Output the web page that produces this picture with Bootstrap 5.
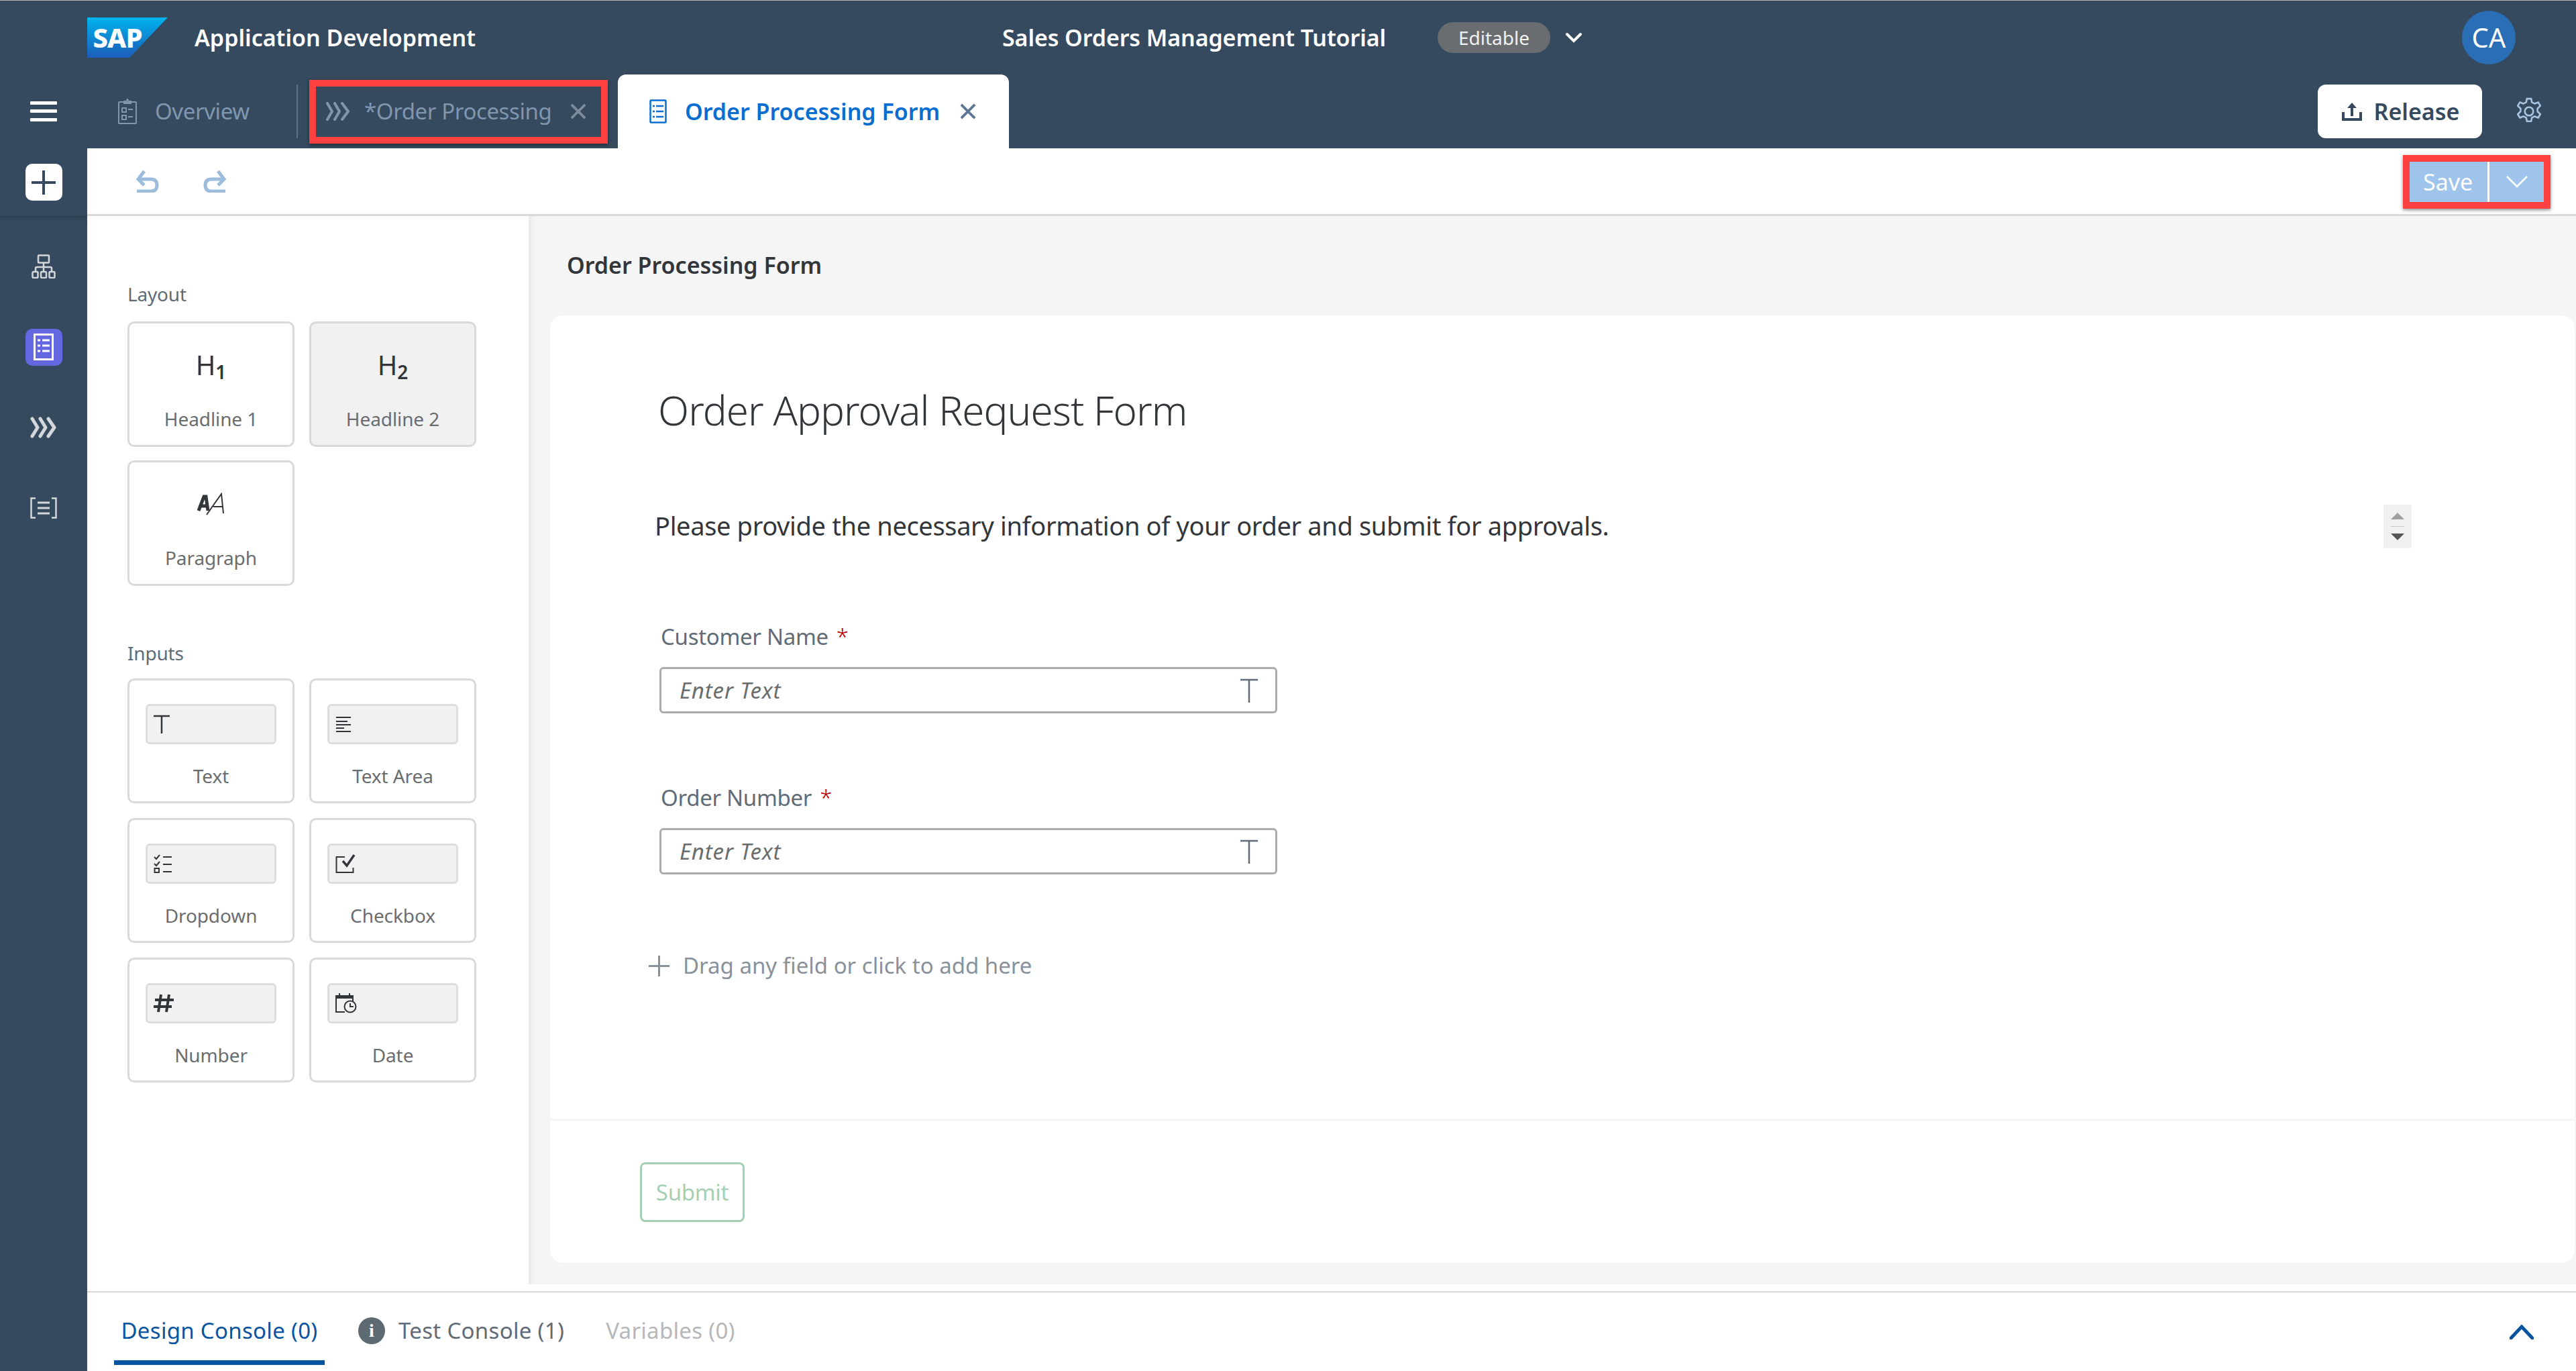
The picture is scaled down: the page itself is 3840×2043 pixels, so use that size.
<!DOCTYPE html>
<html lang="en"><head><meta charset="utf-8"><title>Application Development</title>
<link href="https://cdn.jsdelivr.net/npm/bootstrap@5.3.0/dist/css/bootstrap.min.css" rel="stylesheet">
<style>
html,body{height:100%}
body{font-family:"Noto Sans","Open Sans",sans-serif;background:#fff;border-top:1px solid #b5b5b5;color:#32363a;overflow:hidden}
.app-shell{height:100%}
.rail{width:130px;background:#354a5f;flex:none}
.rail-top{height:320px;padding-top:150px;box-shadow:0 5px 8px rgba(0,0,0,.13)}
.rail-burger{width:40px;height:30px;margin-bottom:63px}
.rail-plus{width:55px;height:55px;background:#fff;border-radius:10px}
.rail-list{padding-top:16px}
.rail-item{height:120px}
.rail-form{width:55px;height:55px;background:#6567e0;border-radius:10px}
.shell-head{height:110px;background:#354a5f;color:#fff}
.sap-logo{width:120px;height:60px;flex:none;position:relative;display:block}
.sap-logo svg{display:block}
.sap-word{position:absolute;left:2px;top:0;width:86px;height:60px;line-height:60px;font-size:40px;font-weight:800;color:#fff;letter-spacing:-1px;text-align:center}
.app-title{font-size:34px;font-weight:600;margin-left:40px;width:1204px;white-space:nowrap}
.proj-title{font-size:34px;font-weight:600;width:649px;white-space:nowrap;letter-spacing:-.1px}
.pill-edit{width:168px;height:46px;background:#6a6d70;color:#f0f0f0;border-radius:23px;font-size:28px}
.head-chev{margin-left:23px}
.user-dot{width:80px;height:80px;border-radius:50%;background:#2a6fb5;font-size:40px;margin-right:90px;margin-left:auto;color:#fff}
.tab-row{height:110px;background:#354a5f;align-items:stretch}
.tab-ov{width:314px;height:80px;align-self:center;padding-left:46px;border-right:2px solid #5d7186;color:#7f96ae;font-size:33px;letter-spacing:-.4px;gap:27px}
.tab-red{width:445px;height:95px;align-self:center;margin-left:17px;border:10px solid #ff4040;box-shadow:0 2px 5px rgba(0,0,0,.45);color:#7f96ae;font-size:33px;letter-spacing:-.4px;padding-left:14px}
.tab-red-ico{margin-right:20px}
.tab-red-x{margin-right:22px}
.tab-cur{width:583px;margin-left:15px;background:#fff;border-radius:12px 12px 0 0;padding-left:47px;color:#0a6ed1;font-size:34px;font-weight:600}
.tab-cur-ico{margin-right:27px}
.tab-cur-txt{width:410px;white-space:nowrap}
.btn-release{width:245px;height:80px;background:#fff;border:0;border-radius:12px;color:#354a5f;font-size:34px;font-weight:600;gap:18px;padding:0 0 0 2px}
.btn-release:hover{background:#fff;color:#354a5f}
.gear-wrap{margin:0 49px}
.tool-row{height:101px;border-bottom:3px solid #d9d9d9;padding-left:72px;background:#fff}
.undo-ico{margin-right:66px}
.save-box{width:220px;height:80px;border:10px solid #ff4040;box-shadow:0 2px 5px rgba(0,0,0,.45);margin-left:auto;margin-right:38px;margin-top:2px;background:#9fc4ec;color:#fff;font-size:34px}
.save-main{width:119px;border-right:3px solid #fff;height:100%;padding-left:20px}
.work{min-height:0}
.palette{width:658px;padding:98px 0 0 60px;flex:none;background:#fff}
.pal-head{font-size:28px;line-height:36px;color:#5f6b76;margin-bottom:23px;letter-spacing:-.2px}
.pal-head-2{margin-top:82px;margin-bottom:20px}
.pal-grid{display:grid;grid-template-columns:249px 249px;gap:20px 22px;grid-auto-rows:187px}
.pal-grid-2{gap:22px;grid-auto-rows:186px}
.pal-cell{border:3px solid #d9d9d9;border-radius:10px;background:#fff;color:#6a6d70;font-size:28px;line-height:36px;letter-spacing:-.1px}
.pal-cell-on{background:#f1f1f1}
.pal-ico{height:60px;margin:32px 0 32px;font-size:40px;line-height:1;color:#32363a;letter-spacing:0}
.pal-ico sub{font-size:28px;font-weight:600;bottom:-.22em;line-height:0}
.pal-mini{width:195px;height:60px;margin:35px 0 29px;background:#f1f1f1;border:3px solid #ddd;border-radius:6px;padding-left:9px}
.canvas{background:#f5f5f5;box-shadow:inset 12px 0 10px -8px rgba(0,0,0,.06);min-width:0}
.canvas-title{padding:53px 0 0 57px;line-height:40px;font-size:34px;font-weight:600;color:#32363a;margin-bottom:55px}
.form-card{margin:0 2px 32px 32px;background:#fff;border-radius:20px;min-height:0}
.form-body{padding:101px 0 0 162px;border-bottom:3px solid #f5f5f5}
.form-h{font-size:60px;line-height:80px;font-weight:300;margin:0 0 0 -1px;color:#32363a;letter-spacing:-.9px}
.desc-row{margin:101px 0 0 -6px;width:2619px;height:65px}
.desc-txt{font-size:38px;line-height:50px;color:#32363a;letter-spacing:-.35px;margin-top:-3px}
.spin{width:42px;height:65px;background:#f0f0f0;border-radius:0 2px 2px 0}
.fld-lab{margin:112px 0 25px 3px;font-size:33px;line-height:40px;color:#5f6b76;letter-spacing:-.3px}
.fld-lab-2{margin-top:106px}
.req{color:#bb0000;margin-left:12px;font-weight:300}
.fld-box{width:921px;height:69px;margin-left:1px;border:3px solid #ababab;border-radius:6px;padding:0 26px 0 27px;background:#fff}
.fld-input{border:0;outline:0;flex:1;font-size:33px;font-style:italic;padding:0;min-width:0;letter-spacing:.85px;color:#32363a;background:transparent}
.fld-input::placeholder{color:#6a6d70;opacity:1}
.drag-row{margin:116px 0 0 -15px;height:40px;font-size:33px;color:#89919a;gap:20px;letter-spacing:0}
.form-foot{height:212px;padding:62px 0 0 134px}
.btn-submit{width:156px;height:89px;border:3px solid #a5cfb5;color:#a5cfb5;background:#fff;border-radius:8px;font-size:33px;padding:0;letter-spacing:-.3px}
.btn-submit:hover{background:#fff;color:#a5cfb5;border-color:#a5cfb5}
.work-gap{height:10px;background:#fff;flex:none}
.dock{height:119px;border-top:2px solid #d9d9d9;padding-left:40px;background:#fff;flex:none;font-size:33px;letter-spacing:.3px}
.dock-tab{height:108px;padding-top:13px;border-bottom:7px solid transparent;align-self:flex-start;white-space:nowrap}
.dock-on{width:314px;color:#0854a0;border-bottom-color:#0854a0;justify-content:center}
.dock-test{margin-left:50px;color:#5f6b76;gap:20px}
.dock-var{margin-left:62px;color:#b5b8bb}
.info-dot{width:40px;height:40px;border-radius:50%;background:#5d6a72;color:#fff;font-size:28px;font-weight:700;font-family:"Liberation Serif",serif;line-height:40px;letter-spacing:0}
.dock-up{margin-left:auto;margin-right:63px}
</style></head>
<body>
<div class="app-shell d-flex">
  <aside class="rail d-flex flex-column">
    <div class="rail-top d-flex flex-column align-items-center">
      <svg class="rail-burger" viewBox="0 0 40 30"><g fill="#fff"><rect y="0" width="40" height="5" rx="1"/><rect y="12" width="40" height="5" rx="1"/><rect y="25" width="40" height="5" rx="1"/></g></svg>
      <div class="rail-plus d-flex align-items-center justify-content-center"><svg width="36" height="36" viewBox="0 0 36 36"><path d="M18 0v36M0 18h36" stroke="#354a5f" stroke-width="4"/></svg></div>
    </div>
    <div class="rail-list d-flex flex-column align-items-center">
      <div class="rail-item d-flex align-items-center"><svg width="36" height="36" viewBox="0 0 36 36" fill="none" stroke="#d4d7da" stroke-width="2.5"><rect x="10" y="1.5" width="16" height="11" rx="1"/><path d="M18 13v6M6 26v-5q0-2 2-2h20q2 0 2 2v5M18 19v7"/><rect x="1.5" y="26" width="8" height="9" rx="1.5"/><rect x="14" y="26" width="8" height="9" rx="1.5"/><rect x="26.5" y="26" width="8" height="9" rx="1.5"/></svg></div>
      <div class="rail-item d-flex align-items-center"><div class="rail-form d-flex align-items-center justify-content-center"><svg width="30" height="40" viewBox="0 0 30 40" fill="none"><rect x="1.5" y="1.5" width="27" height="37" stroke="#fff" stroke-width="3"/><g stroke="#fff" stroke-width="3"><path d="M6 10h4M13 10h11M6 18h4M13 18h11M6 26h4M13 26h11"/></g></svg></div></div>
      <div class="rail-item d-flex align-items-center"><svg width="40" height="32" viewBox="0 0 40 32" fill="none" stroke="#d4d7da" stroke-width="5" stroke-linecap="round" stroke-linejoin="round"><path d="M3 3l8 13-8 13M15 3l8 13-8 13M27 3l9 13-9 13"/></svg></div>
      <div class="rail-item d-flex align-items-center"><svg width="40" height="32" viewBox="0 0 40 32" fill="none" stroke="#d4d7da" stroke-width="2.5"><path d="M8 1.5H1.5v29H8M32 1.5h6.500v29H32"/><path d="M11 8h18M11 16h18M11 24h18" stroke-width="3"/></svg></div>
    </div>
  </aside>
  <div class="flex-grow-1 d-flex flex-column" style="min-width:0">
    <header class="shell-head d-flex align-items-center">
      <div class="sap-logo"><svg width="120" height="60" viewBox="0 0 120 60"><defs><linearGradient id="sapg" x1="0" y1="0" x2="0" y2="1"><stop offset="0" stop-color="#00b4ee"/><stop offset="1" stop-color="#1c5cb8"/></linearGradient></defs><polygon points="0,0 120,0 63,60 0,60" fill="url(#sapg)"/></svg><span class="sap-word">SAP</span></div>
      <div class="app-title">Application Development</div>
      <div class="proj-title">Sales Orders Management Tutorial</div>
      <div class="pill-edit d-flex align-items-center justify-content-center">Editable</div>
      <svg width="24" height="16" viewBox="0 0 24 16" fill="none" stroke="#fff" stroke-width="4" stroke-linecap="round" class="head-chev"><path d="M2 3l10 10L22 3"/></svg>
      <div class="user-dot d-flex align-items-center justify-content-center">CA</div>
    </header>
    <div class="tab-row d-flex">
      <div class="tab-ov d-flex align-items-center">
        <svg width="28" height="38" viewBox="0 0 28 38" fill="none" stroke="#7f96ae" stroke-width="2"><rect x="1" y="5" width="26" height="32" rx="1"/><path d="M9 7V4h3l2-3 2 3h3v3zM6 14h6v6H6zM6 25h6v6H6zM15 16h7M15 27h7"/></svg>
        <span>Overview</span>
      </div>
      <div class="tab-red d-flex align-items-center">
        <svg width="38" height="28" viewBox="0 0 38 28" fill="none" stroke="#7f96ae" stroke-width="4" stroke-linecap="round" stroke-linejoin="round" class="tab-red-ico"><path d="M3 2l7 12-7 12M14 2l7 12-7 12M25 2l9 12-9 12"/></svg>
        <span class="flex-grow-1">*Order Processing</span>
        <svg width="24" height="24" viewBox="0 0 26 26" stroke="#7b8c9c" stroke-width="4" class="tab-red-x"><path d="M2 2l22 22M24 2L2 24"/></svg>
      </div>
      <div class="tab-cur d-flex align-items-center">
        <svg width="26" height="36" viewBox="0 0 26 36" fill="none" stroke="#0a6ed1" stroke-width="2.500" class="tab-cur-ico"><rect x="1.500" y="1.500" width="23" height="33" rx="1"/><path d="M5 10h3M10 10h11M5 18h3M10 18h11M5 26h3M10 26h11"/></svg>
        <span class="tab-cur-txt">Order Processing Form</span>
        <svg width="24" height="24" viewBox="0 0 26 26" stroke="#5b7692" stroke-width="4"><path d="M2 2l22 22M24 2L2 24"/></svg>
      </div>
      <div class="d-flex align-items-center ms-auto">
        <button class="btn btn-release d-flex align-items-center justify-content-center" type="button"><svg width="30" height="30" viewBox="0 0 30 30" fill="none" stroke="#354a5f" stroke-width="4"><path d="M2 16v11h26V16M15 22V4"/><path d="M8 10l7-8 7 8z" fill="#354a5f" stroke="none"/></svg><span>Release</span></button>
        <div class="gear-wrap"><svg width="42" height="42" viewBox="0 0 40 40" fill="none" stroke="#a9c4df" stroke-width="2.500" stroke-linejoin="round"><circle cx="20" cy="20" r="6"/><path d="M17 2h6l1 5 4 2 5-2 3 5-4 4v4l4 4-3 5-5-2-4 2-1 5h-6l-1-5-4-2-5 2-3-5 4-4v-4l-4-4 3-5 5 2 4-2z"/></svg></div>
      </div>
    </div>
    <div class="tool-row d-flex align-items-center">
      <svg width="35" height="34" viewBox="0 0 35 34" fill="none" stroke="#9dbcdc" stroke-width="5" class="undo-ico"><path d="M2 32h21q9 0 9-9t-9-9H6"/><path d="M13 2L4 14l9 9"/></svg>
      <svg width="35" height="34" viewBox="0 0 35 34" fill="none" stroke="#9dbcdc" stroke-width="5"><path d="M33 32H12q-9 0-9-9t9-9h17"/><path d="M22 2l9 12-9 9"/></svg>
      <div class="save-box d-flex align-items-center">
        <div class="save-main d-flex align-items-center"><span>Save</span></div>
        <div class="flex-grow-1 d-flex align-items-center justify-content-center"><svg width="32" height="20" viewBox="0 0 32 20" fill="none" stroke="#fff" stroke-width="2.500"><path d="M1 2l15 15L31 2"/></svg></div>
      </div>
    </div>
    <div class="work flex-grow-1 d-flex">
      <section class="palette">
        <div class="pal-head">Layout</div>
        <div class="pal-grid">
          <div class="pal-cell d-flex flex-column align-items-center"><div class="pal-ico d-flex align-items-center justify-content-center"><span>H<sub>1</sub></span></div><span>Headline 1</span></div>
          <div class="pal-cell pal-cell-on d-flex flex-column align-items-center"><div class="pal-ico d-flex align-items-center justify-content-center"><span>H<sub>2</sub></span></div><span>Headline 2</span></div>
          <div class="pal-cell d-flex flex-column align-items-center"><div class="pal-ico d-flex align-items-center justify-content-center"><svg width="42" height="34" viewBox="0 0 42 34" fill="none" stroke="#32363a"><path d="M2 27L10 6h3l3 21M5 20h10" stroke-width="5"/><path d="M14 33L36 2l3 29M24 21h14" stroke-width="2"/></svg></div><span>Paragraph</span></div>
        </div>
        <div class="pal-head pal-head-2">Inputs</div>
        <div class="pal-grid pal-grid-2">
          <div class="pal-cell d-flex flex-column align-items-center"><div class="pal-mini d-flex align-items-center"><svg width="24" height="28" viewBox="0 0 24 28" stroke="#32363a" stroke-width="2.500"><path d="M0 2h24M12 2v26"/></svg></div><span>Text</span></div>
          <div class="pal-cell d-flex flex-column align-items-center"><div class="pal-mini d-flex align-items-center"><svg width="24" height="24" viewBox="0 0 24 24" stroke="#32363a" stroke-width="2"><path d="M1 2h22M1 8h17M1 13h22M1 18h12M1 23h22"/></svg></div><span>Text Area</span></div>
          <div class="pal-cell d-flex flex-column align-items-center"><div class="pal-mini d-flex align-items-center"><svg width="28" height="30" viewBox="0 0 28 30" fill="none" stroke="#32363a" stroke-width="2"><path d="M1 5l3 3 5-6M1 15l3 3 5-6"/><rect x="1.500" y="22" width="6.500" height="6"/><path d="M14 5h13M14 16h13M14 27h13"/></svg></div><span>Dropdown</span></div>
          <div class="pal-cell d-flex flex-column align-items-center"><div class="pal-mini d-flex align-items-center"><svg width="30" height="30" viewBox="0 0 30 30" fill="none" stroke="#32363a"><path d="M14 5H1.500v23h25v-7" stroke-width="2"/><path d="M11 11l6 7L28 2" stroke-width="3.500"/></svg></div><span>Checkbox</span></div>
          <div class="pal-cell d-flex flex-column align-items-center"><div class="pal-mini d-flex align-items-center"><svg width="30" height="28" viewBox="0 0 30 28" stroke="#32363a" stroke-width="4"><path d="M11 1L7 27M23 1l-4 26M2 9h28M0 19h27"/></svg></div><span>Number</span></div>
          <div class="pal-cell d-flex flex-column align-items-center"><div class="pal-mini d-flex align-items-center"><svg width="32" height="30" viewBox="0 0 32 30" fill="none" stroke="#32363a" stroke-width="2"><path d="M14 28H1V4h25v8"/><path d="M1 4h25v3H1z" fill="#32363a"/><path d="M6 0v4M21 0v4" stroke-width="2"/><circle cx="22" cy="20" r="8.500"/><path d="M22 15v5h5"/></svg></div><span>Date</span></div>
        </div>
      </section>
      <main class="canvas flex-grow-1 d-flex flex-column">
        <div class="canvas-title">Order Processing Form</div>
        <div class="form-card flex-grow-1 d-flex flex-column">
          <div class="form-body flex-grow-1">
            <h1 class="form-h">Order Approval Request Form</h1>
            <div class="desc-row d-flex align-items-center justify-content-between">
              <div class="desc-txt">Please provide the necessary information of your order and submit for approvals.</div>
              <div class="spin d-flex flex-column align-items-center justify-content-center"><svg width="20" height="42" viewBox="0 0 20 42"><polygon points="0,10 10,0 20,10" fill="#a0a0a0"/><rect x="-9" y="20" width="38" height="1" fill="#c8c8c8"/><polygon points="0,31 20,31 10,41" fill="#555"/></svg></div>
            </div>
            <div class="fld-lab">Customer Name<span class="req">*</span></div>
            <div class="fld-box d-flex align-items-center"><input class="fld-input" placeholder="Enter Text" aria-label="Customer Name"><svg width="26" height="36" viewBox="0 0 26 36" stroke="#5f6b76" stroke-width="2.500"><path d="M0 2h26M13 2v34"/></svg></div>
            <div class="fld-lab fld-lab-2">Order Number<span class="req">*</span></div>
            <div class="fld-box d-flex align-items-center"><input class="fld-input" placeholder="Enter Text" aria-label="Order Number"><svg width="26" height="36" viewBox="0 0 26 36" stroke="#5f6b76" stroke-width="2.500"><path d="M0 2h26M13 2v34"/></svg></div>
            <div class="drag-row d-flex align-items-center"><svg width="31" height="31" viewBox="0 0 31 31" stroke="#89919a" stroke-width="3"><path d="M15.500 0v31M0 15.500h31"/></svg><span>Drag any field or click to add here</span></div>
          </div>
          <div class="form-foot"><button class="btn btn-submit" type="button">Submit</button></div>
        </div>
      </main>
    </div>
    <div class="work-gap"></div>
    <footer class="dock d-flex align-items-center">
      <div class="dock-tab dock-on d-flex align-items-center">Design Console (0)</div>
      <div class="dock-tab dock-test d-flex align-items-center"><span class="info-dot d-inline-flex justify-content-center">i</span><span>Test Console (1)</span></div>
      <div class="dock-tab dock-var d-flex align-items-center">Variables (0)</div>
      <svg class="dock-up" width="36" height="22" viewBox="0 0 36 22" fill="none" stroke="#0854a0" stroke-width="5" stroke-linecap="round"><path d="M2 20L18 3l16 17"/></svg>
    </footer>
  </div>
</div>
<script src="https://cdn.jsdelivr.net/npm/bootstrap@5.3.0/dist/js/bootstrap.bundle.min.js"></script>
</body></html>
